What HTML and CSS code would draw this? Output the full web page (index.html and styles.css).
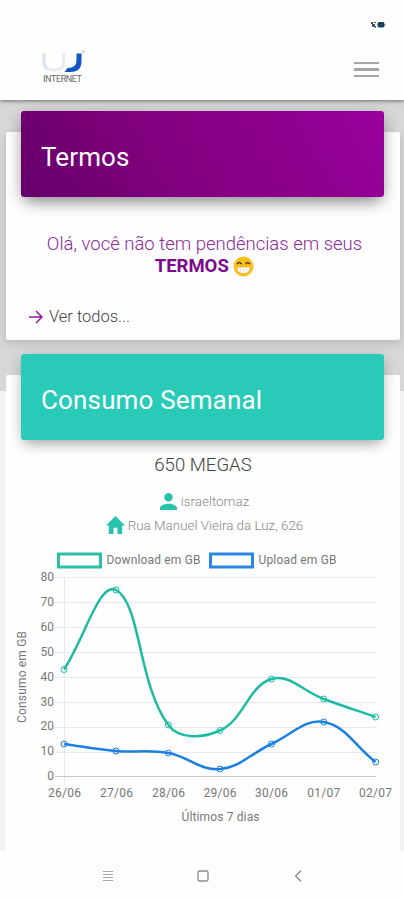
FILE: index.html
```
<!DOCTYPE html>
<html lang="pt-BR">
<head>
  <meta charset="utf-8">
  <meta name="viewport" content="width=device-width, initial-scale=1">
  <title>UJ Internet</title>
  <link rel="stylesheet" href="styles.css">
</head>
<body>
<header class="topbar">
  <div class="statusbar">
    <svg width="16" height="8" viewBox="0 0 16 8">
      <path d="M1 1h2v2H1zM4 1h2v1H4zM2 3h3v3H2zM5 5h1v2H5z" fill="#49545a"/>
      <rect x="7.500" y="1" width="7" height="5.500" rx="2" fill="#17384f"/>
      <path d="M9 3h4v2H9z" fill="#0a4f88"/>
      <path d="M15 3v2" stroke="#6f8796"/>
    </svg>
  </div>
  <div class="topbar__row">
    <div class="logo">
      <svg class="logo__mark" width="44" height="24" viewBox="0 0 44 24">
        <path d="M2.500 4v9q0 7 8 8h3q8-1 8-8V4" fill="none" stroke="#e6eaf5" stroke-width="3"/>
        <path d="M1.200 4v9q0 6 4 8" fill="none" stroke="#c3cbd9" stroke-width=".8"/>
        <path d="M34.500 4.500h5V12q0 11-11 11H22.500l3-4q9 0 9-8z" fill="#1455c4"/>
        <circle cx="41.300" cy="2.500" r="1" fill="none" stroke="#aaa" stroke-width=".7"/>
      </svg>
      <span class="logo__text">INTERNET</span>
    </div>
    <div class="burger"><span></span><span></span><span></span></div>
  </div>
</header>

<main class="page">
  <section class="card card_terms">
    <h2 class="card__header card__header_purple">Termos</h2>
    <p class="terms">Olá, você não tem pendências em seus<br>
      <b>TERMOS</b>
      <svg class="terms__emoji" width="21" height="21" viewBox="0 0 21 21">
        <circle cx="10.500" cy="10.500" r="10" fill="#fcc21b"/>
        <path d="M4.300 7.800q2-2.500 4 0M12.700 7.800q2-2.500 4 0" fill="none" stroke="#51382b" stroke-width="1.400" stroke-linecap="round"/>
        <path d="M4 11h13q.5 6.500-6.500 6.500T4 11z" fill="#fff" stroke="#d6a32a" stroke-width=".6"/>
        <path d="M4.500 14h12M7.500 11v5.500M10.500 11v6.500M13.500 11v5.500" stroke="#ddd4c0" stroke-width=".5"/>
      </svg>
    </p>
    <a class="more" href="#">
      <svg width="14" height="14" viewBox="0 0 14 14"><path d="M0 7h13M7 1l6 6-6 6" fill="none" stroke="#8e1a9b" stroke-width="1.500"/></svg>
      <span>Ver todos...</span>
    </a>
  </section>

  <section class="card card_usage">
    <h2 class="card__header card__header_teal">Consumo Semanal</h2>
    <h3 class="plan">650 MEGAS</h3>
    <div class="info">
      <svg width="17" height="17" viewBox="4 4 16 16"><path d="M12 12c2.210 0 4-1.790 4-4s-1.790-4-4-4-4 1.790-4 4 1.790 4 4 4zm0 2c-2.670 0-8 1.340-8 4v2h16v-2c0-2.660-5.330-4-8-4z" fill="#27c3ac"/></svg>
      <span class="info__user">israeltomaz</span>
    </div>
    <div class="info info_address">
      <svg width="19" height="18" viewBox="2 3 20 17" preserveAspectRatio="none"><path d="M10 20v-6h4v6h5v-8h3L12 3 2 12h3v8z" fill="#27c3ac"/></svg>
      <span class="info__address">Rua Manuel Vieira da Luz, 626</span>
    </div>
    <svg class="chart" width="394" height="290" viewBox="6 545 394 290">
      <g class="chart__legend">
        <rect x="58.500" y="554" width="42" height="13" stroke="#2bbfa9"/>
        <rect x="210.500" y="554" width="42" height="13" stroke="#2b87e3"/>
      </g>
      <g class="chart__text">
        <text x="106.500" y="564" textLength="94">Download em GB</text>
        <text x="258.500" y="564" textLength="78">Upload em GB</text>
      </g>
      <path class="chart__grid" d="M55 577.500H376M55 602.500H376M55 627.500H376M55 652.500H376M55 677.500H376M55 702.500H376M55 727.500H376M55 752.500H376M64.500 577V785"/>
      <path class="chart__axis" d="M55 776.500H376"/>
      <g class="chart__text chart__text_y">
        <text x="54" y="581">80</text>
        <text x="54" y="606">70</text>
        <text x="54" y="631">60</text>
        <text x="54" y="656">50</text>
        <text x="54" y="681">40</text>
        <text x="54" y="706">30</text>
        <text x="54" y="730">20</text>
        <text x="54" y="755">10</text>
        <text x="54" y="780">0</text>
      </g>
      <g class="chart__text chart__text_x">
        <text x="64.500" y="796.500" textLength="33">26/06</text>
        <text x="116.500" y="796.500" textLength="33">27/06</text>
        <text x="168.500" y="796.500" textLength="33">28/06</text>
        <text x="220" y="796.500" textLength="33">29/06</text>
        <text x="271.500" y="796.500" textLength="33">30/06</text>
        <text x="323.700" y="796.500" textLength="33">01/07</text>
        <text x="375.500" y="796.500" textLength="33">02/07</text>
        <text x="220.500" y="820.500" textLength="78">Últimos 7 dias</text>
        <text transform="translate(26 677) rotate(-90)" textLength="92">Consumo em GB</text>
      </g>
      <g class="chart__line chart__line_up">
        <path d="M64 744C84.800 746.800 95.200 749.200 116 751S147.500 749.400 168.300 753 199.400 770.800 220 769 250.800 753.400 271.500 744 304.400 718.700 323.700 722C346.100 725.900 354.800 746 375.600 762"/>
        <circle cx="64" cy="744" r="3"/>
        <circle cx="116" cy="751" r="3"/>
        <circle cx="168.300" cy="753" r="3"/>
        <circle cx="220" cy="769" r="3"/>
        <circle cx="271.500" cy="744" r="3"/>
        <circle cx="323.700" cy="722" r="3"/>
        <circle cx="375.600" cy="762" r="3"/>
      </g>
      <g class="chart__line chart__line_down">
        <path d="M64 669.500C84.800 637.700 99.500 581.200 116 590C141 603.400 137.700 683.700 168.300 725C179.300 739.900 202.900 738.100 220 730.500C244.100 719.700 248.100 686.100 271.500 679C289.500 673.500 302.900 691.400 323.700 699C344.500 706.600 354.800 709.800 375.600 717"/>
        <circle cx="64" cy="669.500" r="3"/>
        <circle cx="116" cy="590" r="3"/>
        <circle cx="168.300" cy="725" r="3"/>
        <circle cx="220" cy="730.500" r="3"/>
        <circle cx="271.500" cy="679" r="3"/>
        <circle cx="323.700" cy="699" r="3"/>
        <circle cx="375.600" cy="717" r="3"/>
      </g>
    </svg>
  </section>
</main>

<nav class="navbar">
  <svg width="12" height="12" viewBox="0 0 12 12"><path d="M1 1.500h10M1 4.500h10M1 7.500h10M1 10.500h10" stroke="#a5a5a5"/></svg>
  <svg width="12" height="12" viewBox="0 0 12 12"><rect x="1" y="1" width="10" height="10" rx="1.500" fill="none" stroke="#8c8c8c" stroke-width="1.300"/></svg>
  <svg width="12" height="12" viewBox="0 0 12 12"><path d="M9 .800L3.500 6 9 11.200" fill="none" stroke="#888" stroke-width="1.300"/></svg>
</nav>
</body>
</html>
```
FILE: styles.css
```
* {
  box-sizing: border-box;
}
body {
  margin: 0;
  height: 900px;
  display: flex;
  flex-direction: column;
  overflow: hidden;
  background: #fdfdfd;
  font-family: Roboto, "Liberation Sans", sans-serif;
  font-weight: 300;
}
h2, h3, p {
  margin: 0;
}

/* topo */
.topbar {
  position: relative;
  height: 100px;
  flex-shrink: 0;
  background: #fefefe;
  box-shadow: 0 1px 4px rgba(0, 0, 0, .5);
}
.statusbar {
  display: flex;
  justify-content: flex-end;
  padding: 21px 18px 0 0;
}
.topbar__row {
  display: flex;
  justify-content: space-between;
  padding: 20px 25px 0 42px;
}
.logo {
  display: flex;
  flex-direction: column;
  width: 44px;
}
.logo__text {
  font-size: 9px;
  line-height: 12px;
  font-weight: 400;
  letter-spacing: -.4px;
  color: #666;
  margin-left: 1px;
}
.burger {
  display: flex;
  flex-direction: column;
  gap: 4px;
  width: 25px;
  padding-top: 13px;
}
.burger span {
  height: 2.400px;
  background: #a6a6a6;
}

/* cards */
.page {
  height: 751px;
  padding: 32px 4px 0 6px;
  background: linear-gradient(#d7d7d7 291px, #f3f3f3 291px);
  overflow: hidden;
}
.card {
  display: flex;
  flex-direction: column;
  align-items: center;
  background: #fefefe;
  border-radius: 2px;
  box-shadow: 0 3px 9px rgba(0, 0, 0, .15);
}
.card_terms {
  height: 208px;
}
.card_usage {
  height: 476px;
  margin-top: 35px;
  box-shadow: none;
}
.card__header {
  width: 363px;
  height: 86px;
  flex-shrink: 0;
  margin: -21px 1px 0 0;
  padding-left: 20px;
  border-radius: 3px;
  color: #fff;
  font-size: 26px;
  line-height: 92px;
  font-weight: 400;
}
.card__header_purple {
  background: linear-gradient(60deg, #65006a, #82007f 40%, #98009b);
  box-shadow: 0 8px 15px -4px rgba(0, 0, 0, .42), 0 2px 16px rgba(0, 0, 0, .14);
  letter-spacing: .1px;
}
.card__header_teal {
  background: #29cbb8;
  letter-spacing: .15px;
  box-shadow: 0 7px 13px -4px rgba(0, 0, 0, .3), 0 2px 14px rgba(0, 0, 0, .12);
}
.terms {
  margin-top: 36px;
  padding-left: 3px;
  text-align: center;
  color: #8b2a9b;
  font-size: 18.500px;
  line-height: 22px;
  white-space: nowrap;
}
.terms b {
  font-weight: 700;
  color: #7d0a8b;
}
.terms__emoji {
  vertical-align: -5px;
}
.more {
  display: flex;
  align-items: center;
  align-self: flex-start;
  gap: 6px;
  margin: 30px 0 0 23px;
  color: #444;
  font-size: 16.500px;
  line-height: 20px;
  text-decoration: none;
}

/* consumo */
.plan {
  margin-top: 13px;
  font-size: 18.600px;
  line-height: 24px;
  font-weight: 300;
  color: #444;
}
.info {
  display: flex;
  align-items: center;
  gap: 4px;
  height: 24px;
  margin: 12px 0 0 3px;
  font-size: 13.400px;
  color: #888;
}
.info_address {
  margin-top: 0;
  gap: 3px;
}
.chart {
  flex-shrink: 0;
  margin-top: 8px;
}
.chart__legend rect {
  fill: #fff;
  stroke-width: 3;
}
.chart__text {
  fill: #777;
  font-size: 12px;
  font-weight: 400;
}
.chart__text_y {
  text-anchor: end;
}
.chart__text_x {
  text-anchor: middle;
}
.chart__grid {
  stroke: #e8e8e8;
}
.chart__axis {
  stroke: #c6c6c6;
}
.chart__line {
  fill: none;
  stroke-width: 2.500;
}
.chart__line circle {
  stroke-width: 1;
}
.chart__line_down {
  stroke: #1dbba5;
}
.chart__line_up {
  stroke: #1a7fe0;
}

/* botões do sistema */
.navbar {
  display: flex;
  flex-grow: 1;
  justify-content: space-between;
  align-items: center;
  padding: 0 100px 0 102px;
}
```
